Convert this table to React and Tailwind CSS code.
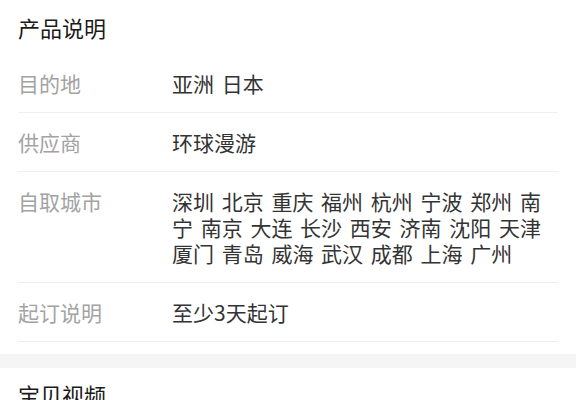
// 产品说明 section
const rows = [
  { label: "目的地", value: "亚洲 日本" },
  { label: "供应商", value: "环球漫游" },
  {
    label: "自取城市",
    value:
      "深圳 北京 重庆 福州 杭州 宁波 郑州 南宁 南京 大连 长沙 西安 济南 沈阳 天津 厦门 青岛 威海 武汉 成都 上海 广州",
  },
  { label: "起订说明", value: "至少3天起订" },
];

const App = () => {
  return (
    <div className="w-[576px] h-[400px] overflow-hidden bg-white font-['Noto_Sans_CJK_SC',sans-serif]">
      {/* Product info */}
      <div className="px-[18px]">
        <h3 className="pt-[12px] pb-[12px] text-[22px] leading-[30px] font-normal text-[#1a1a1a]">
          产品说明
        </h3>

        {rows.map((row) => (
          <div
            key={row.label}
            className="flex py-4 border-b border-[#eeeeee] text-[21px] leading-[26px]"
          >
            <div className="w-[154px] shrink-0 text-[#a3a3a3]">{row.label}</div>
            <div className="flex-1 text-[#333] [word-spacing:3px]">{row.value}</div>
          </div>
        ))}
      </div>

      {/* Spacer */}
      <div className="mt-3 h-[14px] bg-[#f5f5f5]" />

      {/* Video */}
      <div className="px-[18px]">
        <h3 className="pt-[11px] text-[22px] leading-[30px] font-normal text-[#1a1a1a]">
          宝贝视频
        </h3>
      </div>
    </div>
  );
};

export default App;
